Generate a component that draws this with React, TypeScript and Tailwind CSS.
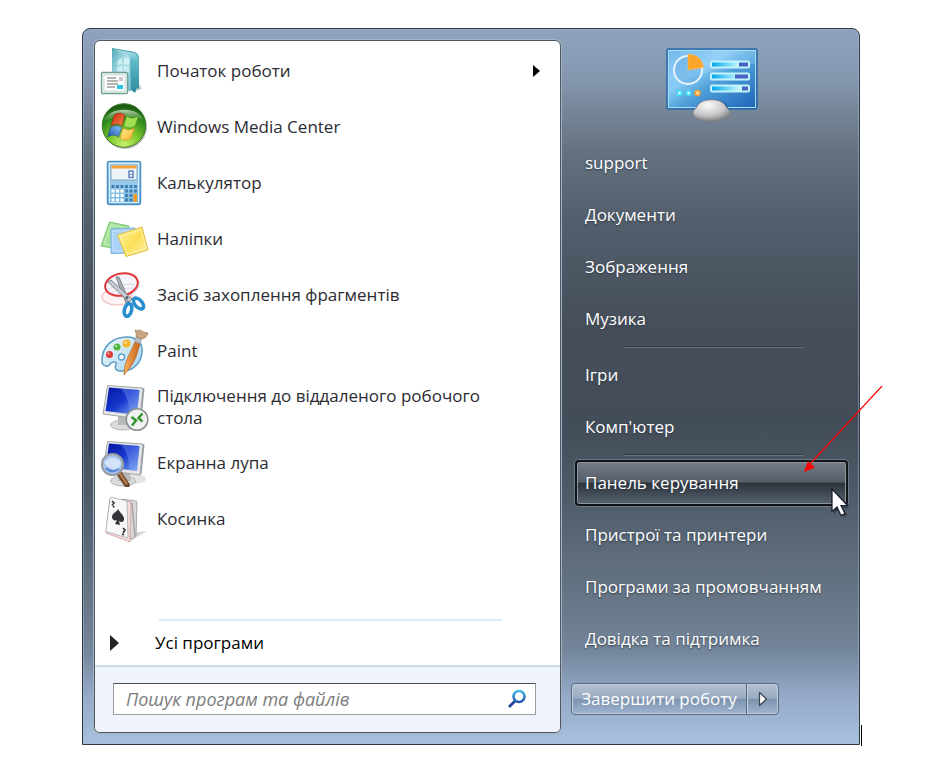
/**
 * Start menu with pinned programs, search field and the system links column
 */

import { Fragment, ReactNode } from 'react'

interface Program {
  name: string
  icon: ReactNode
  hasSubmenu?: boolean
}

interface PlaceGroup {
  id: string
  items: string[]
}

function GettingStartedIcon() {
  return (
    <svg className="size-12 shrink-0" viewBox="0 0 48 48" aria-hidden="true">
      <defs>
        <linearGradient id="gs-front" x1="0" y1="0" x2="1" y2="1">
          <stop offset="0" stopColor="#4fa9b8" />
          <stop offset="0.5" stopColor="#b5e3ea" />
          <stop offset="1" stopColor="#6fbfca" />
        </linearGradient>
        <linearGradient id="gs-side" x1="0" y1="0" x2="0" y2="1">
          <stop offset="0" stopColor="#bfe9ee" />
          <stop offset="0.3" stopColor="#5fbac8" />
          <stop offset="1" stopColor="#2c8b9c" />
        </linearGradient>
      </defs>
      <path d="M33 45l9-3-3-6z" fill="#9aa5a8" opacity="0.5" />
      <path d="M12 1l23 4q4 1 4 6v31l-2-1-2 5-5-4z" fill="url(#gs-side)" />
      <path d="M12 1.500l15 6q3 1 3 5l1 32-19-6z" fill="url(#gs-front)" />
      <path d="M12 1.500l22 4q4 1 4.500 6" fill="none" stroke="#4a9fae" />
      <path d="M18 13l4-2v6l-5 1zM24 11l6 1-1 6-5-1zM17 20l5-1v6l-5-1zM24 19l5 1v6l-5-1z" fill="#d9f6fa" opacity="0.75" />
      <rect x="1.500" y="25.500" width="26" height="21" rx="1" fill="#eef3f2" stroke="#6f9f97" strokeWidth="1.400" />
      <rect x="4" y="28" width="21" height="16" fill="#fff" stroke="#c9dcd8" />
      <path d="M7 31h9M7 34h11M7 37h11M7 40h8" stroke="#9a9a9a" strokeWidth="1.300" />
      <rect x="19" y="30" width="4" height="4" fill="#c8c8c8" />
      <rect x="17" y="38" width="6" height="4" fill="#2fc4e6" />
    </svg>
  )
}

function MediaCenterIcon() {
  return (
    <svg className="size-12 shrink-0" viewBox="0 0 48 48" aria-hidden="true">
      <defs>
        <radialGradient id="mc-ball" cx="0.5" cy="0.95" r="0.9">
          <stop offset="0" stopColor="#c8f26a" />
          <stop offset="0.4" stopColor="#7cc52d" />
          <stop offset="0.75" stopColor="#2f8a1c" />
          <stop offset="1" stopColor="#1d5a14" />
        </radialGradient>
        <linearGradient id="mc-shine" x1="0" y1="0" x2="0" y2="1">
          <stop offset="0" stopColor="#dfe9da" stopOpacity="0.8" />
          <stop offset="1" stopColor="#7fae6c" stopOpacity="0.15" />
        </linearGradient>
        <linearGradient id="mc-red" x1="0" y1="0" x2="1" y2="1">
          <stop offset="0" stopColor="#c9220c" />
          <stop offset="1" stopColor="#f88a4c" />
        </linearGradient>
        <linearGradient id="mc-blue" x1="0" y1="1" x2="1" y2="0">
          <stop offset="0" stopColor="#1a4fb0" />
          <stop offset="1" stopColor="#8ccbf6" />
        </linearGradient>
        <linearGradient id="mc-yellow" x1="0" y1="0" x2="1" y2="1">
          <stop offset="0" stopColor="#fff0a0" />
          <stop offset="1" stopColor="#fbae1c" />
        </linearGradient>
      </defs>
      <circle cx="25" cy="24" r="22" fill="#777" opacity="0.45" />
      <circle cx="24" cy="22.500" r="21.800" fill="url(#mc-ball)" stroke="#3a7a2a" />
      <path d="M4 18C8 3 40 3 44 18 34 12 14 13 4 18z" fill="url(#mc-shine)" />
      <path d="M14 12q6-4 11 0l-3 11q-5-4-11 0z" fill="url(#mc-red)" stroke="#7d2408" strokeWidth="0.500" />
      <path d="M26.500 13q6 4 12 0l-3.500 10.500q-6 3-11.500 0z" fill="#a2de52" stroke="#2f7d12" strokeWidth="0.500" />
      <path d="M10.500 24.500q6-4 11 0l-3 9.500q-5-4-11 0z" fill="url(#mc-blue)" stroke="#163c7e" strokeWidth="0.500" />
      <path d="M23 25q5.500 4 11.500 0l-3.500 10.500q-5 3.500-11 0z" fill="url(#mc-yellow)" stroke="#c47a12" strokeWidth="0.500" />
    </svg>
  )
}

function CalculatorIcon() {
  const rows = [26, 30.500, 35, 39.500]
  const cols = [11.500, 16, 20.500, 25, 29.500, 34]
  return (
    <svg className="size-12 shrink-0" viewBox="0 0 48 48" aria-hidden="true">
      <defs>
        <linearGradient id="calc-body" x1="0" y1="0" x2="0" y2="1">
          <stop offset="0" stopColor="#b5dcf3" />
          <stop offset="1" stopColor="#79b9e2" />
        </linearGradient>
      </defs>
      <rect x="7.500" y="2.500" width="33" height="43" rx="2" fill="url(#calc-body)" stroke="#4b8fc4" strokeWidth="1.500" />
      <rect x="9.500" y="4.500" width="29" height="39" fill="none" stroke="#d4edfa" />
      <rect x="11" y="6" width="26" height="15" fill="#edf5fb" stroke="#7ba5c6" />
      <rect x="11.500" y="6.500" width="25" height="3" fill="#f5a43a" />
      <rect x="29" y="12" width="4" height="6.500" fill="none" stroke="#5c7fb8" strokeWidth="1.400" />
      <path d="M29 15.500h4" stroke="#5c7fb8" strokeWidth="0.800" />
      {rows.map((y, row) =>
        cols.map((x, col) => (
          <rect key={`${x}-${y}`} x={x} y={y} width="3" height="3" rx="0.500" fill={row === 0 || col > 2 ? '#4380b3' : '#fff'} />
        ))
      )}
      <rect x="33.500" y="35" width="3.500" height="8" fill="#f59a20" />
    </svg>
  )
}

function StickyNotesIcon() {
  return (
    <svg className="size-12 shrink-0" viewBox="0 0 48 48" overflow="visible" aria-hidden="true">
      <defs>
        <linearGradient id="note-yellow" x1="0" y1="0" x2="1" y2="1">
          <stop offset="0" stopColor="#fff3a5" />
          <stop offset="0.5" stopColor="#fbdf58" />
          <stop offset="1" stopColor="#fff0a0" />
        </linearGradient>
      </defs>
      <path d="M9.500 7L29 11l-5 24L1 31z" fill="#a5e29a" stroke="#7cc673" />
      <path d="M11 10l15 3-3 19L4 29z" fill="none" stroke="#d5f3cd" strokeDasharray="2 1" />
      <path d="M11 14l24-1v25l-24 .5z" fill="#a9d2f8" stroke="#78aee0" />
      <path d="M13 16h18v20H13z" fill="none" stroke="#d6eafc" strokeDasharray="2 1" />
      <path d="M17.500 20L42 12l6 23-22 6.500z" fill="url(#note-yellow)" stroke="#e0bd43" />
      <path d="M20 21.500L41 14.500l5 19-18.500 5.500z" fill="none" stroke="#fff8cc" strokeDasharray="2 1" />
    </svg>
  )
}

function SnippingIcon() {
  return (
    <svg className="size-12 shrink-0" viewBox="0 0 48 48" aria-hidden="true">
      <ellipse cx="17" cy="26" rx="15" ry="8" fill="#fdf3f3" stroke="#f3b8b8" strokeWidth="1.200" />
      <ellipse cx="23" cy="15" rx="17" ry="11" transform="rotate(-12 23 15)" fill="#999" opacity="0.35" />
      <ellipse cx="21.500" cy="13.500" rx="16.500" ry="11" transform="rotate(-12 21.500 13.500)" fill="#f4f4fa" stroke="#e0393c" strokeWidth="2" />
      <path d="M8 18q10-5 27-5M10 22q10-5 24-5" stroke="#d8d8e4" fill="none" />
      <path d="M16 6l3 0 10 24-3 2z" fill="#a9b0b6" stroke="#6b7278" strokeWidth="0.800" />
      <path d="M8 11l3-2 21 19-3 3z" fill="#c6ccd1" stroke="#6b7278" strokeWidth="0.800" />
      <ellipse cx="28" cy="39" rx="3.600" ry="6.500" transform="rotate(14 28 39)" fill="#fff" stroke="#2a8fd0" strokeWidth="3.600" />
      <ellipse cx="38.500" cy="32.500" rx="3.600" ry="6.500" transform="rotate(-42 38.500 32.500)" fill="#fff" stroke="#2a8fd0" strokeWidth="3.600" />
      <circle cx="27" cy="26.500" r="1.500" fill="#5a6066" />
    </svg>
  )
}

function PaintIcon() {
  return (
    <svg className="size-12 shrink-0" viewBox="0 0 48 48" overflow="visible" aria-hidden="true">
      <defs>
        <linearGradient id="pal" x1="0" y1="0" x2="1" y2="1">
          <stop offset="0" stopColor="#f2fafe" />
          <stop offset="1" stopColor="#a3d3ee" />
        </linearGradient>
        <linearGradient id="brush" x1="0" y1="0" x2="1" y2="0">
          <stop offset="0" stopColor="#f9b25c" />
          <stop offset="1" stopColor="#c9621a" />
        </linearGradient>
      </defs>
      <path d="M2 36C1 19 13 10 27 10c9 0 16 5 15 15-1 13-11 20-22 19-4 0-6-3-4-6 1-3-2-4-5-2-2 2-2 4-4 3-2 0-4-1-5-3z" fill="url(#pal)" stroke="#5a9cc4" strokeWidth="1.500" />
      <circle cx="21.500" cy="30" r="3" fill="#fff" stroke="#5a9cc4" strokeWidth="1.300" />
      <circle cx="9.500" cy="27.500" r="3.500" fill="#df3b32" />
      <circle cx="17" cy="20" r="3.500" fill="#56b83e" />
      <circle cx="26.500" cy="16.500" r="4" fill="#f9b62a" />
      <circle cx="8.500" cy="26.500" r="1" fill="#fff" opacity="0.7" />
      <circle cx="16" cy="19" r="1" fill="#fff" opacity="0.7" />
      <circle cx="25.500" cy="15.500" r="1.200" fill="#fff" opacity="0.7" />
      <path d="M35 15l5 2-4 13q-3 8-12 18 0-10 4-18z" fill="url(#brush)" stroke="#b4601d" strokeWidth="0.700" />
      <path d="M34.500 14l2-4 5 2-1.500 5z" fill="#b9bec2" stroke="#858b90" strokeWidth="0.600" />
      <path d="M36 10q1-3-1-7 3 1 5 0 4 3 8 3-1 5-6 6z" fill="#c9a680" stroke="#a07c58" strokeWidth="0.700" />
    </svg>
  )
}

function Monitor({ id }: { id: string }) {
  return (
    <>
      <defs>
        <linearGradient id={id} x1="0" y1="0" x2="1" y2="1">
          <stop offset="0" stopColor="#0417a0" />
          <stop offset="0.5" stopColor="#1636cc" />
          <stop offset="1" stopColor="#7fb0f5" />
        </linearGradient>
      </defs>
      <ellipse cx="34" cy="40" rx="12" ry="5" fill="#bbb" opacity="0.4" />
      <ellipse cx="23" cy="42" rx="12.500" ry="5" fill="#d9dadb" stroke="#b4b6b8" />
      <path d="M18 33h12l1 9H18z" fill="#b7b9bb" />
      <path d="M7.500 2.500L43 5l-3 31L3 31z" fill="#e4e5e6" stroke="#a3a6a8" />
      <path d="M43 5l1.500 1-3 29-1.500 1z" fill="#9b9ea0" />
      <path d="M9 4.500L39.500 7 37 32 5.500 28z" fill={`url(#${id})`} />
      <path d="M21 5.500L39.500 7 37 32l-8-1q1-15-8-25.500z" fill="#86a8f8" opacity="0.35" />
    </>
  )
}

function RemoteDesktopIcon() {
  return (
    <svg className="size-12 shrink-0" viewBox="0 0 48 48" overflow="visible" aria-hidden="true">
      <Monitor id="screen-rdp" />
      <circle cx="37" cy="36.500" r="10.800" fill="#f1f2f2" stroke="#8c8f91" strokeWidth="1.500" />
      <path d="M31.500 34l4.500 3.500-4 5M42.500 30.500l-4 4.500 4 3.500" fill="none" stroke="#35982f" strokeWidth="2.500" />
    </svg>
  )
}

function MagnifierIcon() {
  return (
    <svg className="size-12 shrink-0" viewBox="0 0 48 48" aria-hidden="true">
      <Monitor id="screen-mag" />
      <path d="M19 34l8 12" stroke="#6b4428" strokeWidth="5.500" strokeLinecap="round" />
      <path d="M19.500 34l7 10.500" stroke="#b17a4d" strokeWidth="2.500" strokeLinecap="round" />
      <circle cx="12.500" cy="25.500" r="10.500" fill="#a9c6f0" stroke="#989da2" strokeWidth="2.200" />
      <path d="M4 23q9-8 17 0-1 8-8 7-6-1-9-7z" fill="#dce9fb" opacity="0.8" />
      <path d="M6 29q6 6 13 1" fill="none" stroke="#5484d6" strokeWidth="2" />
    </svg>
  )
}

function SolitaireIcon() {
  return (
    <svg className="size-12 shrink-0" viewBox="0 0 48 48" aria-hidden="true">
      <path d="M32 45l15-9-10 1z" fill="#aaa" opacity="0.5" />
      <path d="M22 4l14 2q1 0 1 2l-1 33-5 4z" fill="#d9d8d8" stroke="#999" strokeWidth="0.800" />
      <path d="M32 8l3 34" stroke="#a5a5a5" strokeWidth="1.500" />
      <path d="M10 3l21 4-1 40-24-9z" fill="#f3dcdc" stroke="#cf8686" strokeDasharray="1.500 1" />
      <path d="M10 3.500q0-1 2-1l13 3q2 0 2 3l1 33q0 2-2 1L7 37q-2-1-1-3z" fill="#f8f8f9" stroke="#aaaaac" strokeWidth="0.800" />
      <path d="M18 14c2 4 7 7 6 11-1 3-4 2-5 1l1 4-5-1 2-4c-2 1-5 0-5-3 0-4 5-5 6-8z" fill="#333538" />
      <path d="M12 6l2 2-2 2M13 10.500l1 2M23 33l2 2-2 3M22 39l2 1" stroke="#333" strokeWidth="1.600" fill="none" />
    </svg>
  )
}

function ControlPanelIcon() {
  const bars = [
    { y: 13, rest: 9 },
    { y: 25, rest: 13 },
    { y: 37, rest: 6 }
  ]
  return (
    <svg className="h-[75px] w-[92px]" viewBox="0 0 92 75" aria-hidden="true">
      <defs>
        <linearGradient id="cp-screen" x1="0" y1="0" x2="1" y2="1">
          <stop offset="0" stopColor="#5ba8e2" />
          <stop offset="0.35" stopColor="#8accf6" />
          <stop offset="0.55" stopColor="#4f9fd9" />
          <stop offset="1" stopColor="#1d62b8" />
        </linearGradient>
        <linearGradient id="cp-bar" x1="0" y1="0" x2="1" y2="0">
          <stop offset="0" stopColor="#04a4ee" />
          <stop offset="1" stopColor="#b4f4fd" />
        </linearGradient>
        <radialGradient id="cp-foot" cx="0.4" cy="0.25" r="0.8">
          <stop offset="0" stopColor="#fbfbfb" />
          <stop offset="0.6" stopColor="#c6c6c8" />
          <stop offset="1" stopColor="#76777a" />
        </radialGradient>
      </defs>
      <rect x="1" y="1" width="90" height="60" rx="1.500" fill="url(#cp-screen)" stroke="#2869a8" strokeWidth="1.500" />
      <rect x="2.500" y="2.500" width="87" height="57" fill="none" stroke="#a9dcf8" strokeWidth="1" />
      <path d="M3 34C35 29 60 15 89 16V3H3z" fill="#b5e5ff" opacity="0.25" />
      <circle cx="22" cy="22" r="14" fill="#69aee2" fillOpacity="0.5" stroke="#e6f4fd" strokeWidth="2" />
      <path d="M22 22V6q14 1 15.500 13.500z" fill="#fba52a" stroke="#fdc063" strokeWidth="0.600" />
      {bars.map(bar => (
        <g key={bar.y}>
          <rect x="44" y={bar.y - 0.500} width="40" height="8" rx="2" fill="#c3f3fc" />
          <rect x="46" y={bar.y + 1.500} width="25" height="4" fill="url(#cp-bar)" />
          <rect x={82 - bar.rest} y={bar.y + 1.500} width={bar.rest} height="4" fill="#4764c4" />
        </g>
      ))}
      <circle cx="13.500" cy="45" r="2.200" fill="#e9ffff" stroke="#45dcf6" strokeWidth="2" />
      <circle cx="22.500" cy="45" r="2.200" fill="#e9ffff" stroke="#45dcf6" strokeWidth="2" />
      <circle cx="31.500" cy="45" r="2.200" fill="#fff2cf" stroke="#f3a333" strokeWidth="2" />
      <path d="M30 60C33 49 58 48 62 60z" fill="#174f96" opacity="0.8" />
      <path d="M27 65c0-3 3-4 5-8 4-7 23-7 27 0 2 4 5 5 5 8 0 11-37 11-37 0z" fill="url(#cp-foot)" stroke="#7d7e81" strokeWidth="0.700" />
    </svg>
  )
}

function SearchIcon() {
  return (
    <svg className="size-5" viewBox="0 0 20 20" aria-hidden="true">
      <defs>
        <linearGradient id="lens" x1="0" y1="0" x2="0" y2="1">
          <stop offset="0" stopColor="#3fb4e4" />
          <stop offset="1" stopColor="#2456b0" />
        </linearGradient>
      </defs>
      <path d="M8 12l-6 6" stroke="#21479b" strokeWidth="2.800" />
      <circle cx="12" cy="7.500" r="5.500" fill="#fff" stroke="url(#lens)" strokeWidth="2.600" />
    </svg>
  )
}

const programs: Program[] = [
  { name: 'Початок роботи', icon: <GettingStartedIcon />, hasSubmenu: true },
  { name: 'Windows Media Center', icon: <MediaCenterIcon /> },
  { name: 'Калькулятор', icon: <CalculatorIcon /> },
  { name: 'Наліпки', icon: <StickyNotesIcon /> },
  { name: 'Засіб захоплення фрагментів', icon: <SnippingIcon /> },
  { name: 'Paint', icon: <PaintIcon /> },
  { name: 'Підключення до віддаленого робочого стола', icon: <RemoteDesktopIcon /> },
  { name: 'Екранна лупа', icon: <MagnifierIcon /> },
  { name: 'Косинка', icon: <SolitaireIcon /> }
]

const places: PlaceGroup[] = [
  { id: 'user', items: ['support', 'Документи', 'Зображення', 'Музика'] },
  { id: 'computer', items: ['Ігри', "Комп'ютер"] },
  { id: 'system', items: ['Панель керування', 'Пристрої та принтери', 'Програми за промовчанням', 'Довідка та підтримка'] }
]

const activePlace = 'Панель керування'

function ProgramRow({ name, icon, hasSubmenu }: Program) {
  return (
    <li>
      <button type="button" className="flex h-14 w-full items-center gap-[9px] pr-5 pl-[5px] text-left">
        {icon}
        <span className="max-w-[340px] flex-1">{name}</span>
        {hasSubmenu && (
          <svg className="ml-auto h-3 w-[7px]" viewBox="0 0 7 12" aria-hidden="true">
            <path d="M0 0l7 6-7 6z" fill="#000" />
          </svg>
        )}
      </button>
    </li>
  )
}

function ProgramsPanel() {
  return (
    <section className="flex min-w-0 flex-1 flex-col overflow-hidden rounded-md border border-[#4d5762] bg-white leading-[22px] text-[#2b2b33] shadow-[0_0_0_1px_#a3b2c4]">
      <ul className="pt-0.5">
        {programs.map(program => (
          <ProgramRow key={program.name} {...program} />
        ))}
      </ul>
      <div className="mt-18 mr-[58px] ml-16 border-t-2 border-[#d9eafa]" />
      <button type="button" className="flex h-11 items-center gap-9 pl-[15px] text-left text-black">
        <svg className="h-4 w-[9px]" viewBox="0 0 9 16" aria-hidden="true">
          <path d="M0 0l9 8-9 8z" fill="#222" />
        </svg>
        Усі програми
      </button>
      <div className="flex-1 border-t-2 border-[#ccdaec] bg-[#eff3fc] pt-4 pr-6 pb-[17px] pl-[18px]">
        <label className="flex h-8 items-center border border-[#9a9da1] border-t-[#4d4d4d] bg-white pr-2 pl-3">
          <input
            type="text"
            aria-label="Пошук програм та файлів"
            placeholder="Пошук програм та файлів"
            className="min-w-0 flex-1 text-[18px] italic outline-none placeholder:text-[#7d7d7d]"
          />
          <SearchIcon />
        </label>
      </div>
    </section>
  )
}

function PlaceLink({ name }: { name: string }) {
  if (name === activePlace) {
    return (
      <a href="#" className="relative my-[3px] flex h-[46px] items-center rounded border-2 border-[#101317] bg-[linear-gradient(#747c88,#565d67_48%,#2c343c_50%,#56626e)] pl-2 shadow-[0_0_0_1px_#6f7a86,inset_0_0_0_1px_#8d959d]">
        {name}
        <svg className="absolute -right-1 -bottom-4 h-8 w-5" viewBox="0 0 20 32" aria-hidden="true">
          <path d="M4 4v22l5-5 4 8 4-2-4-7h6z" fill="#000" opacity="0.35" />
          <path d="M2 1v22.500l5-4.500 4 8.500 4-2-4-8h6.500z" fill="#fff" stroke="#14182a" strokeWidth="1.200" />
        </svg>
      </a>
    )
  }
  return (
    <a href="#" className="flex h-[52px] items-center pl-2.5">
      {name}
    </a>
  )
}

function PlacesPanel() {
  return (
    <nav className="flex w-[287px] shrink-0 flex-col pl-3.5 leading-[22px] text-white [text-shadow:0_1px_2px_#303a46]">
      <div className="flex h-[97px] justify-center pt-2">
        <ControlPanelIcon />
      </div>
      {places.map((group, index) => (
        <Fragment key={group.id}>
          {index > 0 && <div className="mr-11 ml-12 my-px h-0.5 border-t border-b border-t-[#353e48] border-b-[#66717d]" />}
          {group.items.map(item => (
            <PlaceLink key={item} name={item} />
          ))}
        </Fragment>
      ))}
      <div className="mt-[18px] -ml-1 flex h-8 w-[208px] rounded-sm border border-[#5a6b80] bg-[linear-gradient(#b3c1d2,#99abc2_48%,#7d92ad_50%,#9fb4d0)] shadow-[inset_0_0_0_1px_#c0cddd]">
        <button type="button" className="flex-1 whitespace-nowrap">Завершити роботу</button>
        <button type="button" aria-label="Інші параметри" className="flex w-8 items-center justify-center border-l border-[#5a6b80] shadow-[inset_1px_0_0_#c0cddd]">
          <svg className="h-4 w-2.5" viewBox="0 0 10 16" aria-hidden="true">
            <path d="M1.500 1.500L8.500 8l-7 6.500z" fill="#fff" stroke="#3c4654" strokeWidth="1.300" strokeLinejoin="round" />
          </svg>
        </button>
      </div>
    </nav>
  )
}

export default function App() {
  return (
    <main className="min-h-screen bg-white pt-7 pr-[70px] pl-[82px] font-['Open_Sans',sans-serif] text-[17px]">
      <div className="relative flex rounded-t-lg border border-[#2f3a48] bg-[linear-gradient(#8fa3be,#8597af_7%,#64717f_17%,#525e6c_27%,#454e59_42%,#434d59_55%,#4e5a68_65%,#667585_79%,#74869b_87%,#94a8c6_93%,#a6c1de)] p-[11px] shadow-[inset_0_0_0_1px_#a5b7cc80]">
        <ProgramsPanel />
        <PlacesPanel />
        {/* Pointer arrow to the control panel link */}
        <svg className="pointer-events-none absolute top-[357px] -right-6 h-[87px] w-20" viewBox="0 0 80 87" aria-hidden="true">
          <path d="M79 0L6 79" stroke="#f00" strokeWidth="1.200" />
          <path d="M1 86l4-11 7 6.500z" fill="#f00" />
        </svg>
        {/* Text caret after the menu */}
        <span className="absolute -right-[3px] -bottom-0.5 h-[21px] w-px bg-black" />
      </div>
    </main>
  )
}
